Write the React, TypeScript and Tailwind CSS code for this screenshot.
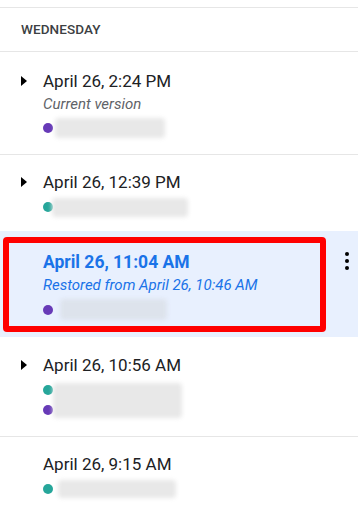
import React from 'react';

type Dot = 'purple' | 'teal';

interface VersionRow {
  title: string;
  subtitle?: string;
  dots: Dot[];
  /** blurred author name placeholder */
  blur: { offset: number; width: number; height: number };
  expandable: boolean;
  border: boolean;
}

const rows: VersionRow[] = [
  {
    title: 'April 26, 2:24 PM',
    subtitle: 'Current version',
    dots: ['purple'],
    blur: { offset: 2, width: 110, height: 20 },
    expandable: true,
    border: true,
  },
  {
    title: 'April 26, 12:39 PM',
    dots: ['teal'],
    blur: { offset: -1, width: 136, height: 19 },
    expandable: true,
    border: false,
  },
];

const after: VersionRow[] = [
  {
    title: 'April 26, 10:56 AM',
    dots: ['teal', 'purple'],
    blur: { offset: 0, width: 129, height: 35 },
    expandable: true,
    border: true,
  },
  {
    title: 'April 26, 9:15 AM',
    dots: ['teal'],
    blur: { offset: 5, width: 118, height: 18 },
    expandable: false,
    border: false,
  },
];

function Caret() {
  return (
    <svg width="6" height="10" viewBox="0 0 6 10" className="ml-[21px] mt-[7px]">
      <polygon points="0,0 6,5 0,10" fill="#000" />
    </svg>
  );
}

function Dots({ row, tint }: { row: VersionRow; tint?: boolean }) {
  return (
    <div className="flex items-center mt-[3px]">
      <div className="flex flex-col">
        {row.dots.map((d, i) => (
          <div key={i} className="h-5 flex items-center">
            <span
              className={
                'w-[10px] h-[10px] rounded-full ' + (d === 'purple' ? 'bg-[#673ab7]' : 'bg-[#26a69a]')
              }
            />
          </div>
        ))}
      </div>
      <div
        className={'rounded-[4px] blur-[2px] ' + (tint ? 'bg-[#dde3ec]' : 'bg-[#e8e8e8]')}
        style={{ marginLeft: row.blur.offset, width: row.blur.width, height: row.blur.height }}
      />
    </div>
  );
}

function Row({ row, pt, pb }: { row: VersionRow; pt: string; pb: string }) {
  return (
    <div className={'flex ' + pt + ' ' + pb + (row.border ? ' border-b border-[#e6e6e6]' : '')}>
      <div className="w-[43px] shrink-0">{row.expandable && <Caret />}</div>
      <div className="flex flex-col">
        <div className="h-6 leading-6 text-[17px] text-[#202124]">{row.title}</div>
        {row.subtitle && (
          <div className="leading-[22px] text-[15px] italic text-[#5f6368]">{row.subtitle}</div>
        )}
        <Dots row={row} />
      </div>
    </div>
  );
}

export default function App() {
  const selected: VersionRow = {
    title: 'April 26, 11:04 AM',
    subtitle: 'Restored from April 26, 10:46 AM',
    dots: ['purple'],
    blur: { offset: 7, width: 107, height: 21 },
    expandable: false,
    border: false,
  };

  return (
    <div className="w-[358px] h-[512px] overflow-hidden bg-white font-['Roboto',sans-serif]">
      <div className="mt-[7px] border-t border-b border-[#e6e6e6] h-[45px] flex items-center pl-[21px]">
        <span className="text-[13.5px] font-medium tracking-[0.1px] text-[#3c4043]">WEDNESDAY</span>
      </div>

      <Row row={rows[0]} pt="pt-[17px]" pb="pb-[16px]" />
      <Row row={rows[1]} pt="pt-[15px]" pb="pb-[14px]" />

      <div className="bg-[#e8f0fe] flex pt-[6px] pb-[5px]">
        <div className="ml-[3px] w-[323px] border-[6px] border-[#ff0000] rounded-[4px] pt-[7px] pb-[6px] pl-[34px]">
          <div className="h-6 leading-6 text-[17.5px] font-bold text-[#1a73e8]">{selected.title}</div>
          <div className="leading-[22px] text-[15px] italic text-[#1a73e8]">{selected.subtitle}</div>
          <Dots row={selected} tint />
        </div>
        <div className="flex flex-col gap-[3px] pl-[19px] pt-[15px]">
          <span className="w-[4px] h-[4px] rounded-full bg-black" />
          <span className="w-[4px] h-[4px] rounded-full bg-black" />
          <span className="w-[4px] h-[4px] rounded-full bg-black" />
        </div>
      </div>

      <Row row={after[0]} pt="pt-[16px]" pb="pb-[16px]" />
      <Row row={after[1]} pt="pt-[15px]" pb="pb-[12px]" />
    </div>
  );
}
